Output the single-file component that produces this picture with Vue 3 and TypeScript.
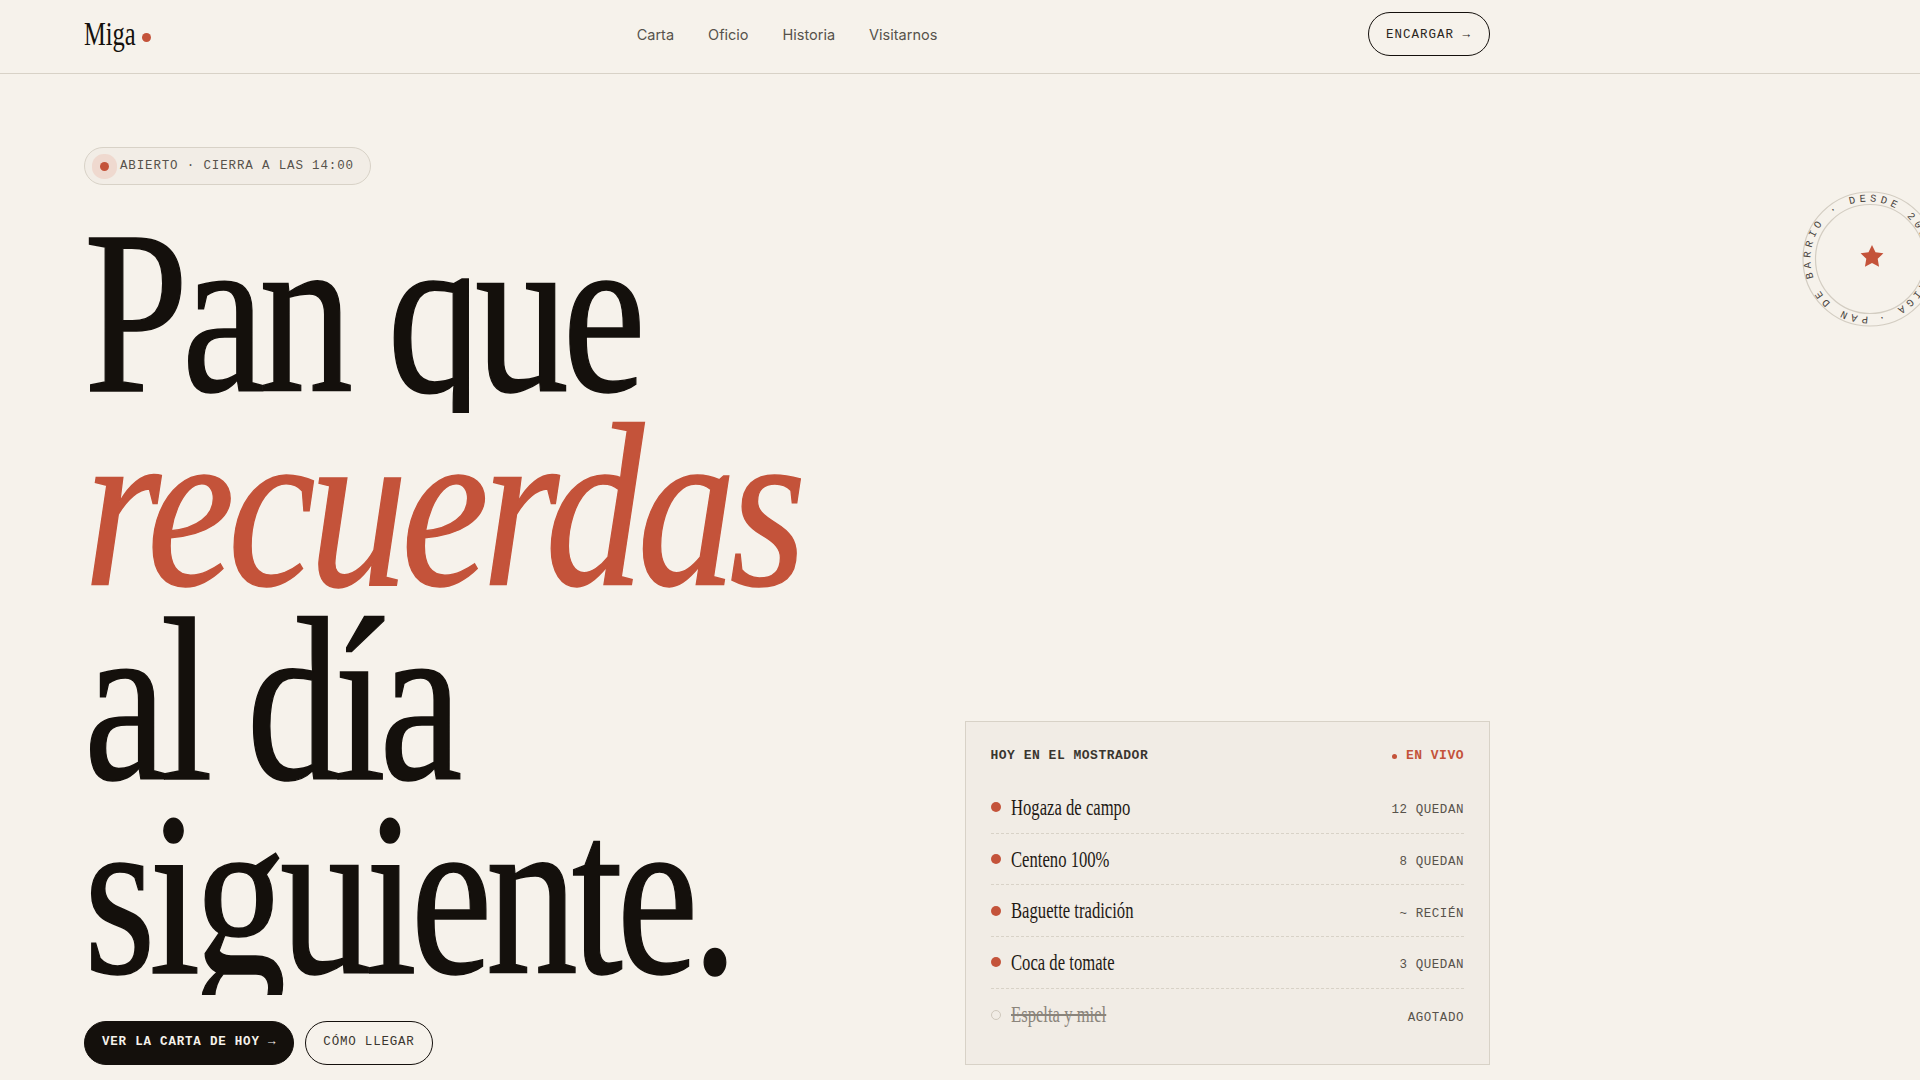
<script setup lang="ts">
interface HeroLine {
  text: string;
  sx: number;
  accent?: boolean;
}

interface StockRow {
  name: string;
  note: string;
  out?: boolean;
}

const links = ['Carta', 'Oficio', 'Historia', 'Visitarnos'];

// the display face is much narrower than Liberation Serif, so each line gets its own squeeze
const lines: HeroLine[] = [
  { text: 'Pan que', sx: 0.802 },
  { text: 'recuerdas', sx: 0.844, accent: true },
  { text: 'al día', sx: 0.798 },
  { text: 'siguiente.', sx: 0.785 },
];

const rows: StockRow[] = [
  { name: 'Hogaza de campo', note: '12 quedan' },
  { name: 'Centeno 100%', note: '8 quedan' },
  { name: 'Baguette tradición', note: '~ recién' },
  { name: 'Coca de tomate', note: '3 quedan' },
  { name: 'Espelta y miel', note: 'agotado', out: true },
];
</script>

<template>
  <div class="page">
    <header class="topbar">
      <div class="topbar-inner">
        <a class="logo">
          <span class="logo-word"><span>Miga</span></span>
          <span class="logo-dot"></span>
        </a>
        <nav class="links">
          <a v-for="link in links" :key="link">{{ link }}</a>
        </nav>
        <a class="order">Encargar →</a>
      </div>
    </header>

    <main class="hero">
      <div class="hero-main">
        <div class="status">
          <span class="status-dot"></span>
          Abierto · cierra a las 14:00
        </div>
        <h1 class="title">
          <span v-for="line in lines" :key="line.text" class="title-line" :class="{ accent: line.accent }">
            <span class="title-text" :style="{ transform: `scaleX(${line.sx})` }">{{ line.text }}</span>
          </span>
        </h1>
        <div class="actions">
          <a class="btn btn-dark">Ver la carta de hoy →</a>
          <a class="btn btn-line">Cómo llegar</a>
        </div>
      </div>

      <aside class="counter">
        <div class="counter-head">
          <span>Hoy en el mostrador</span>
          <span class="live"><i></i>En vivo</span>
        </div>
        <ul class="stock">
          <li v-for="row in rows" :key="row.name" :class="{ out: row.out }">
            <span class="stock-dot"></span>
            <span class="stock-name">{{ row.name }}</span>
            <span class="stock-note">{{ row.note }}</span>
          </li>
        </ul>
      </aside>
    </main>

    <svg class="stamp" viewBox="0 0 136 136" width="136" height="136">
      <defs>
        <path id="stamp-ring" d="M 66 125.5 A 57.5 57.5 0 1 1 66.1 125.5" />
      </defs>
      <circle cx="68" cy="68" r="67" fill="none" stroke="#d3cdc2" stroke-width="1.2" />
      <circle cx="68" cy="68" r="54.5" fill="none" stroke="#d3cdc2" stroke-width="1.2" />
      <text class="stamp-text">
        <textPath href="#stamp-ring">PAN DE BARRIO · DESDE 2016 · MIGA ·</textPath>
      </text>
      <polygon
        points="70,54 73.5,61.15 81.4,62.3 75.7,67.85 77.05,75.7 70,72 62.95,75.7 64.3,67.85 58.6,62.3 66.5,61.15"
        fill="#c4533a"
      />
    </svg>
  </div>
</template>

<style>
html,
body {
  margin: 0;
  background: #f6f2eb;
  overflow-x: hidden;
}
</style>

<style scoped>
.page {
  position: relative;
  min-height: 100vh;
  background: #f6f2eb;
  color: #14100c;
  font-family: "Liberation Mono", monospace;
  overflow: hidden;
}

.topbar {
  border-bottom: 1px solid #d8d2c7;
}

.topbar-inner {
  display: grid;
  grid-template-columns: 1fr auto 1fr;
  align-items: center;
  box-sizing: border-box;
  width: 1406px;
  height: 73px;
  margin-left: 84px;
  padding-bottom: 4px;
}

.logo {
  display: flex;
  align-items: center;
  margin-top: -2px;
}

.logo-word {
  width: 52px;
  font-family: "Liberation Serif", serif;
  font-size: 34px;
  line-height: 40px;
}

.logo-word span {
  display: inline-block;
  transform: scaleX(0.72);
  transform-origin: left center;
}

.logo-dot {
  width: 9px;
  height: 9px;
  margin: 8px 0 0 6px;
  border-radius: 50%;
  background: #c4533a;
}

.links {
  display: flex;
  gap: 34px;
  font-family: "Inter", sans-serif;
  font-size: 14.5px;
  color: #57524b;
}

.order {
  justify-self: end;
  margin-top: -1px;
  padding: 15px 18px 13px 17px;
  border: 1.5px solid #14100c;
  border-radius: 22px;
  color: #2b2722;
  font-size: 12.5px;
  line-height: 14px;
  letter-spacing: 1px;
  text-transform: uppercase;
}

.hero {
  display: grid;
  grid-template-columns: minmax(0, 1fr) 525px;
  align-items: end;
  width: 1406px;
  margin-left: 84px;
  padding-top: 73px;
}

.status {
  display: inline-flex;
  align-items: center;
  gap: 3px;
  height: 36px;
  padding: 0 16px 0 7px;
  border: 1px solid #d8d2c7;
  border-radius: 19px;
  background: #f2ede6;
  color: #57524b;
  font-size: 12.5px;
  letter-spacing: 0.85px;
  text-transform: uppercase;
}

.status-dot {
  width: 9px;
  height: 9px;
  margin: 0 8px;
  border-radius: 50%;
  background: #c4533a;
  box-shadow: 0 0 0 8px #efd9cf;
}

.title {
  margin: 34px 0 26px;
  font-family: "Liberation Serif", serif;
  font-size: 234px;
  font-weight: 400;
  letter-spacing: -7.8px;
  -webkit-text-stroke: 1.5px currentColor;
}

.title-line {
  display: block;
  height: 194px;
  overflow: hidden;
  line-height: 186px;
  white-space: nowrap;
}

.title-text {
  display: inline-block;
  transform-origin: left center;
}

.accent {
  color: #c4533a;
  font-style: italic;
}

.actions {
  display: flex;
  gap: 11px;
}

.btn {
  height: 44px;
  padding: 0 17px;
  border-radius: 22px;
  box-sizing: border-box;
  font-size: 12.5px;
  line-height: 41px;
  letter-spacing: 0.8px;
  text-transform: uppercase;
}

.btn-dark {
  border: 1px solid #14100c;
  background: #14100c;
  color: #f6f2eb;
  font-weight: 700;
}

.btn-line {
  border: 1.5px solid #14100c;
  color: #3a362f;
}

.counter {
  box-sizing: border-box;
  height: 344px;
  padding: 25px 25px 24px 24.5px;
  border: 1px solid #d8d2c7;
  background: #f1ece5;
}

.counter-head {
  display: flex;
  justify-content: space-between;
  margin-bottom: 17px;
  color: #3a362f;
  font-size: 13px;
  font-weight: 700;
  line-height: 18px;
  letter-spacing: 0.5px;
  text-transform: uppercase;
}

.live {
  display: flex;
  align-items: center;
  color: #c4533a;
}

.live i {
  width: 5px;
  height: 5px;
  margin-right: 9px;
  border-radius: 50%;
  background: #c4533a;
}

.stock {
  margin: 0;
  padding: 0;
  list-style: none;
}

.stock li {
  display: flex;
  align-items: center;
  box-sizing: border-box;
  height: 51.7px;
  border-bottom: 1px dashed #d8d2c7;
}

.stock li:last-child {
  border-bottom: 0;
}

.stock-dot {
  flex: none;
  width: 10px;
  height: 10px;
  margin-right: 10.5px;
  border-radius: 50%;
  background: #c4533a;
}

.stock-name {
  flex: 1;
  padding-top: 1px;
  color: #1f1a15;
  font-family: "Liberation Serif", serif;
  font-size: 22.5px;
  transform: scaleX(0.74);
  transform-origin: left center;
  white-space: nowrap;
}

.stock-note {
  padding-top: 6px;
  color: #57524b;
  font-size: 12.5px;
  letter-spacing: 0.55px;
  text-transform: uppercase;
}

.out .stock-dot {
  box-sizing: border-box;
  border: 1px solid #cfc8bc;
  background: transparent;
}

.out .stock-name {
  color: #8a847b;
  text-decoration: line-through;
}

.stamp {
  position: absolute;
  top: 191px;
  right: -18px;
}

.stamp-text {
  fill: #4a453f;
  font-family: "Liberation Mono", monospace;
  font-size: 10.5px;
  letter-spacing: 3.8px;
}
</style>
